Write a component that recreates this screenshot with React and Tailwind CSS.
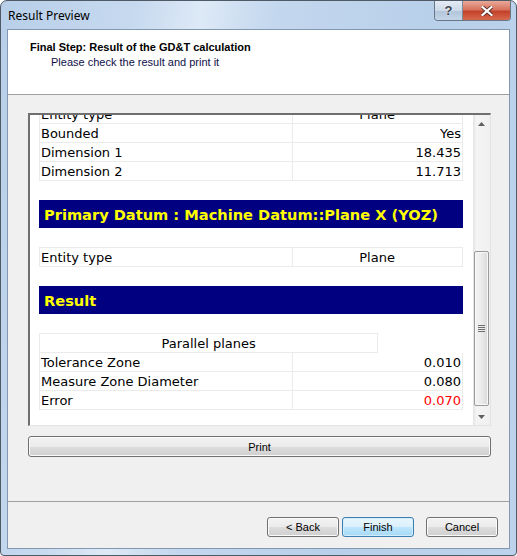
import React from 'react';

const cellBorder = 'border-[#ebebeb]';

const Row = ({ label, value, valueClass = 'text-right', valueColor = 'text-black' }) => (
  <div className={`flex h-[19px] border-b ${cellBorder}`}>
    <div className={`w-[60%] border-r ${cellBorder} pl-[1px] leading-[19px] whitespace-nowrap`}>{label}</div>
    <div className={`flex-1 pr-[1px] leading-[19px] ${valueClass} ${valueColor}`}>{value}</div>
  </div>
);

const Table = ({ children, noTop }) => (
  <div className={`border-x ${noTop ? '' : 'border-t'} ${cellBorder}`}>{children}</div>
);

const Banner = ({ children }) => (
  <div className="mt-[19px] h-[28px] bg-[#000080] pl-[5px] text-[14.6px] font-bold leading-[29px] text-[#ffff00] whitespace-nowrap">
    {children}
  </div>
);

const WinButton = ({ children, primary, className = '' }) => (
  <button
    className={`h-[20px] rounded-[3px] border text-[11px] leading-[18px] text-black ${
      primary
        ? 'border-[#3c7fb1] bg-[linear-gradient(#eaf6fd_0%,#d9f0fc_50%,#bee6fd_51%,#a7d9f5_100%)] shadow-[inset_0_0_0_1px_#d3ecf9]'
        : 'border-[#707070] bg-[linear-gradient(#f2f2f2_0%,#ebebeb_50%,#dddddd_51%,#cfcfcf_100%)] shadow-[inset_0_0_0_1px_#fbfbfb]'
    } ${className}`}
  >
    {children}
  </button>
);

const ScrollBar = () => (
  <div className="flex w-[17px] flex-col bg-[linear-gradient(90deg,#e3e3e3_0%,#f4f4f4_20%,#f0f0f0_100%)]">
    <div className="flex h-[17px] items-center justify-center">
      <svg width="7" height="4" viewBox="0 0 7 4"><path d="M3.5 0 L7 4 L0 4 Z" fill="#606060" /></svg>
    </div>
    <div className="flex-1 pt-[119px]">
      <div className="mx-auto flex h-[155px] w-[15px] items-center justify-center rounded-[2px] border border-[#9a9a9a] bg-[linear-gradient(90deg,#f3f3f3_0%,#ebebeb_50%,#d9d9d9_100%)] shadow-[inset_0_0_0_1px_#f8f8f8]">
        <div className="flex flex-col gap-[1px]">
          <div className="h-[1px] w-[7px] bg-[#707070]" />
          <div className="h-[1px] w-[7px] bg-[#707070]" />
          <div className="h-[1px] w-[7px] bg-[#707070]" />
          <div className="h-[1px] w-[7px] bg-[#707070]" />
        </div>
      </div>
    </div>
    <div className="flex h-[17px] items-center justify-center">
      <svg width="7" height="4" viewBox="0 0 7 4"><path d="M0 0 L7 0 L3.5 4 Z" fill="#606060" /></svg>
    </div>
  </div>
);

export default function App() {
  return (
    <div className="h-[556px] w-[517px] overflow-hidden rounded-t-[7px] rounded-b-[4px] border border-[#4f5a66] bg-[linear-gradient(100deg,#b8cfe9_0%,#c6d9ef_22%,#dde9f6_33%,#c3d7ee_45%,#b9d0ea_70%,#bdd3ec_100%)] font-['Liberation_Sans',Arial,sans-serif]">
      {/* title bar */}
      <div className="flex h-[28px] items-start">
        <div className="pl-[7px] pt-[7px] text-[12px] leading-[15px] text-black font-['Noto_Sans',sans-serif]">Result Preview</div>
        <div className="ml-auto mr-[5px] flex h-[20px] overflow-hidden rounded-b-[4px] border border-t-0 border-[#6b7787]">
          <div className="flex w-[28px] items-center justify-center border-r border-[#7d8a99] bg-[linear-gradient(#e4ecf6_0%,#cdd9e8_50%,#b2c4da_51%,#c4d5e8_100%)] text-[13px] font-bold leading-none text-[#3d4450] [text-shadow:0_0_2px_#fff]">
            ?
          </div>
          <div className="flex w-[47px] items-center justify-center bg-[linear-gradient(#e9a99a_0%,#d8735f_45%,#c3422a_55%,#d6694f_100%)]">
            <svg width="12" height="10" viewBox="0 0 12 10">
              <path d="M1.5 1 L10.5 9 M10.5 1 L1.5 9" stroke="#5a2a22" strokeWidth="4" strokeLinecap="square" />
              <path d="M1.5 1 L10.5 9 M10.5 1 L1.5 9" stroke="#ffffff" strokeWidth="2.2" strokeLinecap="square" />
            </svg>
          </div>
        </div>
      </div>

      {/* client area */}
      <div className="mx-[6px] flex h-[520px] flex-col border border-[#8497b0] bg-[#f0f0f0]">
        {/* header */}
        <div className="h-[65px] border-b border-[#a0a0a0] bg-white pl-[22px] pt-[11px] text-[11px] leading-[13px] text-black">
          <div className="font-bold">Final Step: Result of the GD&amp;T calculation</div>
          <div className="mt-[2px] pl-[21px] text-[#10104a]">Please check the result and print it</div>
        </div>

        {/* preview */}
        <div className="ml-[20px] mt-[18px] flex h-[313px] w-[463px] border-b border-l-2 border-r border-t-2 border-b-[#e3e3e3] border-l-[#6f6f6f] border-r-[#e3e3e3] border-t-[#6f6f6f]">
          <div className="flex-1 overflow-hidden bg-white pl-[9px] pr-[10px] text-[13px] text-black font-['DejaVu_Sans',Verdana,sans-serif]">
            <div className="-mt-[11px]">
              <Table>
                <Row label="Entity type" value="Plane" valueClass="text-center" />
                <Row label="Bounded" value="Yes" />
                <Row label="Dimension 1" value="18.435" />
                <Row label="Dimension 2" value="11.713" />
              </Table>
              <Banner>Primary Datum : Machine Datum::Plane X (YOZ)</Banner>
              <div className="mt-[19px]">
                <Table>
                  <Row label="Entity type" value="Plane" valueClass="text-center" />
                </Table>
              </div>
              <Banner>Result</Banner>
              <div className="mt-[19px]">
                <div className={`w-[80%] border-x border-t ${cellBorder}`}>
                  <div className={`h-[19px] border-b ${cellBorder} text-center leading-[19px]`}>Parallel planes</div>
                </div>
                <Table noTop>
                  <Row label="Tolerance Zone" value="0.010" />
                  <Row label="Measure Zone Diameter" value="0.080" />
                  <Row label="Error" value="0.070" valueColor="text-[#ff0000]" />
                </Table>
              </div>
            </div>
          </div>
          <ScrollBar />
        </div>

        <div className="mt-[10px] pl-[20px]">
          <WinButton className="block h-[21px] w-[463px]">Print</WinButton>
        </div>

        <div className="mt-[44px] h-[1px] bg-[#a0a0a0]" />

        <div className="mt-[15px] flex justify-end pr-[11px]">
          <WinButton className="w-[72px]">&lt; Back</WinButton>
          <WinButton primary className="ml-[3px] w-[72px]">Finish</WinButton>
          <WinButton className="ml-[12px] w-[72px]">Cancel</WinButton>
        </div>
      </div>
    </div>
  );
}
